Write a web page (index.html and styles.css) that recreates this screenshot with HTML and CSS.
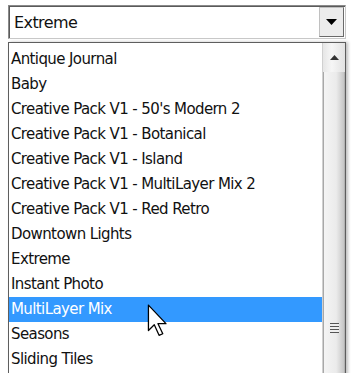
FILE: index.html
```html
<!DOCTYPE html>
<html lang="en">

<head>
    <meta charset="UTF-8">
    <title>Effect Picker</title>
    <link rel="stylesheet" href="styles.css">
</head>

<body>
    <div class="combo">
        <span class="combo-value">Extreme</span>
        <span class="combo-button">
            <svg width="11" height="6" viewBox="0 0 11 6"><path d="M0 0 H11 L5.5 6 Z" fill="#000"/></svg>
        </span>
    </div>

    <div class="list">
        <ul class="items">
            <li>Antique Journal</li>
            <li>Baby</li>
            <li>Creative Pack V1 - 50's Modern 2</li>
            <li>Creative Pack V1 - Botanical</li>
            <li>Creative Pack V1 - Island</li>
            <li>Creative Pack V1 - MultiLayer Mix 2</li>
            <li>Creative Pack V1 - Red Retro</li>
            <li>Downtown Lights</li>
            <li>Extreme</li>
            <li>Instant Photo</li>
            <li class="selected">MultiLayer Mix</li>
            <li>Seasons</li>
            <li>Sliding Tiles</li>
        </ul>
        <div class="scrollbar">
            <svg class="up" width="9" height="5" viewBox="0 0 9 5"><path d="M0 5 H9 L4.5 0 Z" fill="#333"/></svg>
            <div class="thumb">
                <span class="grip"></span>
            </div>
        </div>

        <!-- mouse pointer over the highlighted row -->
        <svg class="pointer" width="22" height="34" viewBox="0 0 20 32">
            <path d="M1 1 V25 L6.5 19.5 L11 29.5 L14.5 28 L10 18.5 H17.5 Z" fill="#fff" stroke="#000" stroke-width="1.2" stroke-linejoin="round"/>
        </svg>
    </div>
</body>

</html>
```

FILE: styles.css
```css
body {
    margin: 0;
    background: #fff;
    font-family: Tahoma, "DejaVu Sans", sans-serif;
    font-size: 15px;
    letter-spacing: -0.6px;
    color: #111;
}

.combo {
    display: flex;
    align-items: stretch;
    margin: 5px 5px 0 8px;
    height: 32px;
    border: 1px solid #8a8a8a;
    border-right-color: #c8c8c8;
    border-bottom-color: #c8c8c8;
    box-shadow: inset 1px 1px 0 #5a5a5a;
}

.combo-value {
    flex: 1;
    display: flex;
    align-items: center;
    padding-left: 5px;
    font-size: 16px;
}

.combo-button {
    width: 23px;
    display: flex;
    align-items: center;
    justify-content: center;
    background: #ececec;
    border: 1px solid #c0c0c0;
    border-right-color: #6a6a6a;
    border-bottom-color: #6a6a6a;
    margin: 1px;
}

.list {
    position: relative;
    display: flex;
    margin: 3px 5px 0 8px;
    height: 340px;
    border: 1px solid #5e5e5e;
    border-bottom: none;
    box-shadow: 2px 0 3px rgba(0, 0, 0, 0.25);
    overflow: hidden;
}

.items {
    flex: 1;
    list-style: none;
    margin: 0;
    padding: 4px 0 0;
}

.items li {
    height: 25px;
    line-height: 25px;
    padding-left: 2px;
    white-space: nowrap;
}

.items li.selected {
    background: #3399ff;
    color: #fff;
}

.scrollbar {
    width: 22px;
    display: flex;
    flex-direction: column;
    align-items: center;
    background: linear-gradient(to right, #e6e6e6, #f6f6f6 40%, #e2e2e2);
    border-left: 1px solid #d0d0d0;
}

.scrollbar .up {
    margin-top: 12px;
    margin-bottom: 12px;
}

.thumb {
    flex: 1;
    align-self: stretch;
    display: flex;
    align-items: center;
    justify-content: center;
    padding-top: 200px;
    background: linear-gradient(to right, #a8a8a8 0, #a8a8a8 1px, #f4f4f4 1px, #ebebeb 60%, #c6c6c6 calc(100% - 1px), #a0a0a0 100%);
}

.grip {
    width: 9px;
    height: 10px;
    background: repeating-linear-gradient(to bottom, #555 0, #555 1px, #eee 1px, #eee 3px);
}

.pointer {
    position: absolute;
    left: 138px;
    top: 261px;
}
```
